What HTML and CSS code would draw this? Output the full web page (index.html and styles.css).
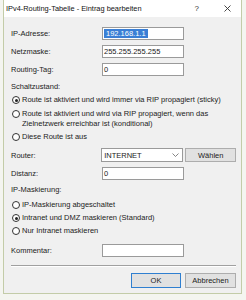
FILE: index.html
```html
<!DOCTYPE html>
<html lang="de">
<head>
    <meta charset="UTF-8">
    <title>IPv4-Routing-Tabelle - Eintrag bearbeiten</title>
    <link rel="stylesheet" href="styles.css">
</head>
<body>

<div class="dialog">
    <div class="titlebar">
        <span class="title">IPv4-Routing-Tabelle - Eintrag bearbeiten</span>
        <span class="help">?</span>
        <svg class="close" width="7" height="7" viewBox="0 0 7 7"><path d="M0.5 0.5 L6.5 6.5 M6.5 0.5 L0.5 6.5" stroke="#333" stroke-width="0.9"/></svg>
    </div>

    <div class="content">
        <div class="row first">
            <label class="label">IP-Adresse:</label>
            <div class="field"><span class="selected">192.168.1.1</span></div>
        </div>
        <div class="row">
            <label class="label">Netzmaske:</label>
            <div class="field">255.255.255.255</div>
        </div>
        <div class="row">
            <label class="label">Routing-Tag:</label>
            <div class="field">0</div>
        </div>

        <div class="group-title">Schaltzustand:</div>
        <div class="radio r1"><span class="dot checked"></span><span>Route ist aktiviert und wird immer via RIP propagiert (sticky)</span></div>
        <div class="radio r2"><span class="dot"></span><span>Route ist aktiviert und wird via RIP propagiert, wenn das<br>Zielnetzwerk erreichbar ist (konditional)</span></div>
        <div class="radio r3"><span class="dot"></span><span>Diese Route ist aus</span></div>

        <div class="row router">
            <label class="label">Router:</label>
            <div class="field select">
                <span>INTERNET</span>
                <svg width="7" height="4" viewBox="0 0 7 4"><path d="M0.5 0.5 L3.5 3.5 L6.5 0.5" fill="none" stroke="#666" stroke-width="0.8"/></svg>
            </div>
            <button class="btn choose">Wählen</button>
        </div>
        <div class="row distance">
            <label class="label">Distanz:</label>
            <div class="field">0</div>
        </div>

        <div class="group-title masq">IP-Maskierung:</div>
        <div class="radio m1"><span class="dot"></span><span>IP-Maskierung abgeschaltet</span></div>
        <div class="radio m2"><span class="dot checked"></span><span>Intranet und DMZ maskieren (Standard)</span></div>
        <div class="radio m3"><span class="dot"></span><span>Nur Intranet maskieren</span></div>

        <div class="row comment">
            <label class="label">Kommentar:</label>
            <div class="field"></div>
        </div>

        <div class="separator"></div>

        <div class="buttons">
            <button class="btn ok">OK</button>
            <button class="btn">Abbrechen</button>
        </div>
    </div>
</div>

</body>
</html>
```

FILE: styles.css
```css
body {
    margin: 0;
    padding: 0 0 0 3px;
    background-color: #f4f5f0;
    font-family: "Liberation Sans", Arial, sans-serif;
    font-size: 7.5px;
    color: #222;
}

.dialog {
    width: 237px;
    height: 293px;
    background-color: #f0f0f0;
    border: 1px solid #c3cca8;
    border-top: none;
    display: flex;
    flex-direction: column;
}

.titlebar {
    height: 17px;
    background-color: #fff;
    display: flex;
    align-items: center;
    padding-left: 2px;
    font-size: 7.4px;
    color: #111;
}

.title {
    white-space: nowrap;
}

.help {
    margin-left: auto;
    font-size: 8px;
    color: #333;
}

.close {
    flex-shrink: 0;
    margin: 0 10px 0 25px;
}

.content {
    padding: 0 5px 0 7px;
}

.row {
    display: flex;
    align-items: center;
    margin-top: 5px;
}

.row.first {
    margin-top: 10px;
}

.label {
    width: 91px;
}

.field {
    width: 79px;
    height: 11px;
    border: 1px solid #9a9a9a;
    background-color: #fff;
    line-height: 11px;
    padding-left: 1px;
    white-space: nowrap;
}

.selected {
    background-color: #3a7fd5;
    color: #fff;
    padding: 0 2px;
}

.group-title {
    margin-top: 6px;
    line-height: 10px;
}

.radio {
    display: flex;
    align-items: flex-start;
    line-height: 10px;
    margin-top: 3px;
}

.dot {
    width: 6px;
    height: 6px;
    border: 1px solid #333;
    border-radius: 50%;
    background-color: #fff;
    margin: 1px 2px 0 1px;
    flex-shrink: 0;
    position: relative;
}

.dot.checked::after {
    content: "";
    position: absolute;
    left: 1.5px;
    top: 1.5px;
    width: 3px;
    height: 3px;
    border-radius: 50%;
    background-color: #222;
}

.r2 {
    margin-top: 4px;
}

.router {
    margin-top: 6px;
}

.select {
    display: flex;
    align-items: center;
    justify-content: space-between;
    padding: 0 3px 0 2px;
    box-sizing: border-box;
    width: 83px;
    height: 14px;
}

.btn {
    font-family: inherit;
    font-size: 7.5px;
    color: #222;
    background-color: #e1e1e1;
    border: 1px solid #adadad;
    width: 51px;
    height: 15px;
    padding: 0;
}

.choose {
    margin-left: 2px;
    height: 14px;
}

.masq {
    margin-top: 5px;
}

.m1 {
    margin-top: 5px;
}

.comment {
    margin-top: 8px;
}

.separator {
    margin-top: 8px;
    border-top: 1px solid #a0a0a0;
    border-bottom: 1px solid #fff;
}

.buttons {
    display: flex;
    justify-content: flex-end;
    gap: 4px;
    margin-top: 6px;
}

.ok {
    border-color: #2f7fd0;
    width: 50px;
}
```
